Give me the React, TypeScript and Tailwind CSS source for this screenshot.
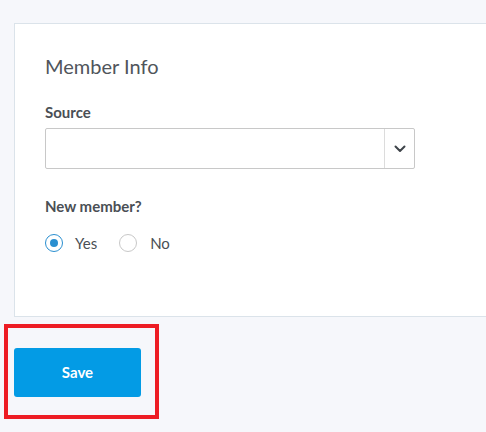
export default function App() {
  const font = { fontFamily: 'Lato, "Noto Sans", sans-serif' }
  return (
    <div
      className="h-[432px] w-[486px] overflow-hidden bg-[#f6f7fb] pl-[4px] pt-[23px] text-[#4a4f55]"
      style={font}
    >
      <div className="ml-[10px] h-[294px] w-[500px] border border-[#dbe3ea] bg-white pl-[30px] pt-[28px]">
        <h2 className="text-[20px] leading-[28px] font-normal text-[#50555b]">Member Info</h2>
        <label className="mt-[22px] block text-[15px] leading-[20px] font-bold">Source</label>
        <div className="mt-[6px] flex h-[41px] w-[370px] rounded-[2px] border border-[#c8c8c8] bg-white">
          <div className="flex-1" />
          <div className="flex w-[30px] items-center justify-center border-l border-[#dcdcdc]">
            <svg width="12" height="8" viewBox="0 0 12 8" fill="none">
              <path d="M1.5 1.5 6 6l4.5-4.5" stroke="#3f444a" strokeWidth="2" strokeLinecap="round" strokeLinejoin="round" />
            </svg>
          </div>
        </div>
        <div className="mt-[27px] text-[15px] leading-[20px] font-bold">New member?</div>
        <div className="mt-[16px] flex items-center text-[15px]">
          <span className="flex h-[18px] w-[18px] items-center justify-center rounded-full border border-[#2a8fd0]">
            <span className="h-[8px] w-[8px] rounded-full bg-[#2a8fd0]" />
          </span>
          <span className="ml-[12px]">Yes</span>
          <span className="ml-[22px] h-[18px] w-[18px] rounded-full border border-[#c8c8c8]" />
          <span className="ml-[13px]">No</span>
        </div>
      </div>
      <div className="mt-[7px] w-[155px] border-[4px] border-[#ed1c24] pb-[18px] pl-[6px] pt-[20px]">
        <button className="h-[49px] w-[127px] rounded-[3px] bg-[#039be5] text-[15px] font-bold text-white">
          Save
        </button>
      </div>
    </div>
  )
}
